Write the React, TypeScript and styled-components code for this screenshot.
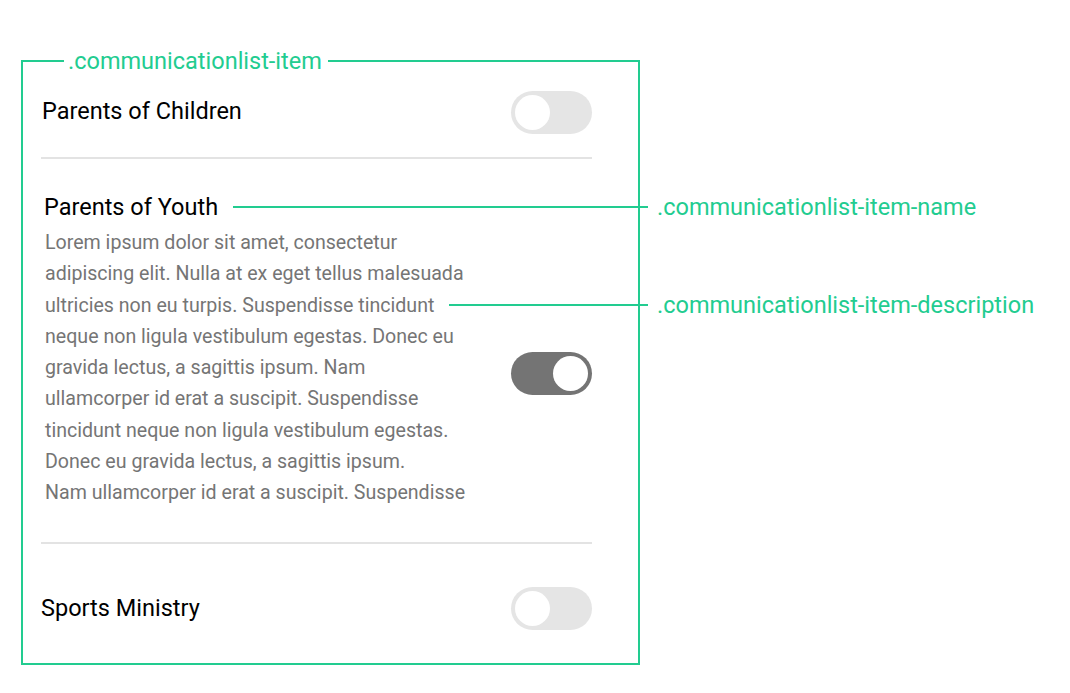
import React from "react";
import styled, { createGlobalStyle } from "styled-components";

const GREEN = "#22cc90";

const GlobalStyle = createGlobalStyle`
  html, body {
    margin: 0;
    padding: 0;
    background: #ffffff;
  }
  body {
    font-family: Roboto, "Liberation Sans", Arial, sans-serif;
    -webkit-font-smoothing: antialiased;
  }
`;

const Page = styled.div`
  width: 1070px;
  height: 693px;
  padding: 60px 0 0 21px;
  box-sizing: border-box;
  overflow: hidden;
`;

const Frame = styled.section`
  position: relative;
  width: 619px;
  box-sizing: border-box;
  border: 2px solid ${GREEN};
  padding: 0 46px 0 18px;
  display: flex;
  flex-direction: column;
`;

const FrameLabel = styled.span`
  position: absolute;
  top: -15px;
  left: 41px;
  padding: 0 6px 0 4px;
  background: #ffffff;
  color: ${GREEN};
  font-size: 23.5px;
  line-height: 28px;
  white-space: nowrap;
`;

const Row = styled.div<{ $top: number; $bottom: number }>`
  display: flex;
  align-items: center;
  justify-content: space-between;
  padding: ${(p) => p.$top}px 0 ${(p) => p.$bottom}px 0;
`;

const ItemBlock = styled.div<{ $top: number; $bottom: number }>`
  display: flex;
  flex-direction: column;
  padding: ${(p) => p.$top}px 0 ${(p) => p.$bottom}px 3px;
`;

const Name = styled.div<{ $indent?: number; $lift?: number }>`
  margin-left: ${(p) => p.$indent ?? 0}px;
  margin-bottom: ${(p) => p.$lift ?? 0}px;
  font-size: 23.5px;
  line-height: 28px;
  color: #000000;
  white-space: nowrap;
`;

const DescRow = styled.div`
  display: flex;
  align-items: center;
  justify-content: space-between;
  margin-top: 6px;
`;

const Description = styled.p`
  margin: 0 0 0 1px;
  font-size: 19.6px;
  line-height: 31.3px;
  color: #757575;
  white-space: nowrap;
`;

const Divider = styled.hr`
  margin: 0;
  border: none;
  height: 2px;
  background: #e3e3e3;
`;

const Track = styled.span<{ $on: boolean; $offset?: number }>`
  flex: none;
  display: flex;
  justify-content: ${(p) => (p.$on ? "flex-end" : "flex-start")};
  align-items: center;
  width: 81px;
  height: 43px;
  padding: 0 4px;
  box-sizing: border-box;
  margin-top: ${(p) => p.$offset ?? 0}px;
  border-radius: 22px;
  background: ${(p) => (p.$on ? "#747474" : "#e5e5e5")};
`;

const Knob = styled.span`
  width: 35px;
  height: 35px;
  border-radius: 50%;
  background: #ffffff;
`;

const Callout = styled.div<{ $top: number; $left: number }>`
  position: absolute;
  top: ${(p) => p.$top}px;
  left: ${(p) => p.$left}px;
  display: flex;
  align-items: center;
  gap: 9px;
  height: 28px;
`;

const CalloutLine = styled.span<{ $width: number }>`
  flex: none;
  width: ${(p) => p.$width}px;
  height: 2px;
  background: ${GREEN};
`;

const CalloutText = styled.span`
  font-size: 23.5px;
  line-height: 28px;
  color: ${GREEN};
  white-space: nowrap;
`;

const Toggle: React.FC<{ on?: boolean; offset?: number }> = ({ on = false, offset }) => (
  <Track $on={on} $offset={offset} role="switch" aria-checked={on}>
    <Knob />
  </Track>
);

const descriptionLines = [
  "Lorem ipsum dolor sit amet, consectetur",
  "adipiscing elit. Nulla at ex eget tellus malesuada",
  "ultricies non eu turpis. Suspendisse tincidunt",
  "neque non ligula vestibulum egestas. Donec eu",
  "gravida lectus, a sagittis ipsum. Nam",
  "ullamcorper id erat a suscipit. Suspendisse",
  "tincidunt neque non ligula vestibulum egestas.",
  "Donec eu gravida lectus, a sagittis ipsum.",
  "Nam ullamcorper id erat a suscipit. Suspendisse",
];

export default function App() {
  return (
    <>
      <GlobalStyle />
      <Page>
        <Frame>
          <FrameLabel>.communicationlist-item</FrameLabel>

          <Row $top={29} $bottom={23}>
            <Name $indent={1} $lift={3}>Parents of Children</Name>
            <Toggle />
          </Row>

          <Divider />

          <ItemBlock $top={34} $bottom={33}>
            <Name>Parents of Youth</Name>
            <DescRow>
              <Description>
                {descriptionLines.map((line, i) => (
                  <React.Fragment key={i}>
                    {line}
                    {i < descriptionLines.length - 1 && <br />}
                  </React.Fragment>
                ))}
              </Description>
              <Toggle on offset={11} />
            </DescRow>
          </ItemBlock>

          <Divider />

          <Row $top={43} $bottom={33}>
            <Name>Sports Ministry</Name>
            <Toggle />
          </Row>

          <Callout $top={131} $left={210}>
            <CalloutLine $width={415} />
            <CalloutText>.communicationlist-item-name</CalloutText>
          </Callout>
          <Callout $top={229} $left={426}>
            <CalloutLine $width={199} />
            <CalloutText>.communicationlist-item-description</CalloutText>
          </Callout>
        </Frame>
      </Page>
    </>
  );
}
